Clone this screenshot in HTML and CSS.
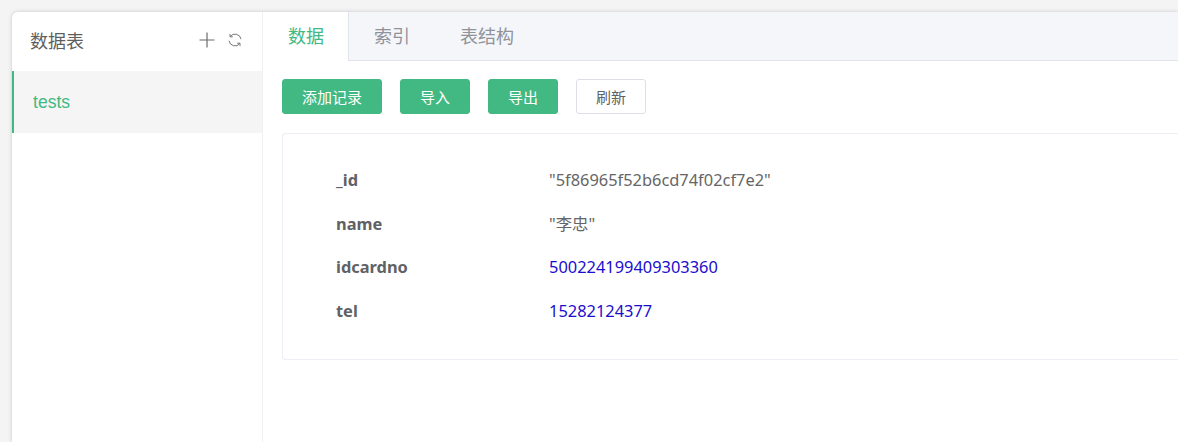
FILE: index.html
```html
<!DOCTYPE html>
<html lang="zh">
<head>
<meta charset="utf-8">
<title>数据表</title>
<link rel="stylesheet" href="styles.css">
</head>
<body>
<div class="panel">
  <aside class="sidebar">
    <div class="side-head">
      <span class="side-title">数据表</span>
      <div class="side-icons">
        <svg class="icon" width="16" height="16" viewBox="0 0 16 16"><path d="M8 .5v15M.5 8h15" fill="none" stroke="#6b6b6b" stroke-width="1.2"/></svg>
        <svg class="icon" width="14" height="14" viewBox="0 0 14 14"><path d="M2.2 3.6A6 6 0 0 1 13 6.2M11.8 10.4A6 6 0 0 1 1 7.8" fill="none" stroke="#777" stroke-width="1"/><path d="M2 1v2.8h2.8M12 13v-2.8H9.2" fill="none" stroke="#777" stroke-width="1"/></svg>
      </div>
    </div>
    <div class="side-item">tests</div>
  </aside>
  <main class="main">
    <nav class="tabs">
      <span class="tab active">数据</span>
      <span class="tab">索引</span>
      <span class="tab">表结构</span>
    </nav>
    <div class="content">
      <div class="toolbar">
        <button class="btn primary wide">添加记录</button>
        <button class="btn primary">导入</button>
        <button class="btn primary">导出</button>
        <button class="btn">刷新</button>
      </div>
      <div class="card">
        <div class="row"><span class="key">_id</span><span class="val">"5f86965f52b6cd74f02cf7e2"</span></div>
        <div class="row"><span class="key">name</span><span class="val">"李忠"</span></div>
        <div class="row"><span class="key">idcardno</span><span class="val num">500224199409303360</span></div>
        <div class="row"><span class="key">tel</span><span class="val num">15282124377</span></div>
      </div>
    </div>
  </main>
</div>
</body>
</html>
```
FILE: styles.css
```css
html, body {
  margin: 0;
  height: 100%;
  overflow: hidden;
}
body {
  background: #f4f4f4;
  padding: 12px 0 0 12px;
  box-sizing: border-box;
  font-family: "Noto Sans", "Noto Sans CJK SC", sans-serif;
  color: #606266;
}
.panel {
  display: flex;
  height: 100%;
  background: #fff;
  border-radius: 6px 0 0 0;
  box-shadow: 0 0 4px rgba(0, 0, 0, 0.18);
}
.sidebar {
  width: 250px;
  flex: none;
  border-right: 1px solid #f0f0f3;
}
.side-head {
  height: 59px;
  box-sizing: border-box;
  padding: 0 20px 4px 18px;
  display: flex;
  align-items: center;
  justify-content: space-between;
}
.side-title {
  font-size: 18px;
  color: #5f5f5f;
  font-family: "Noto Sans CJK SC", sans-serif;
}
.side-icons {
  display: flex;
  align-items: center;
  gap: 13px;
}
.side-item {
  height: 62px;
  line-height: 62px;
  background: #f5f5f5;
  border-left: 2px solid #42b983;
  padding-left: 19px;
  font-family: "Liberation Sans", sans-serif;
  font-size: 17.6px;
  color: #42b983;
}
.main {
  flex: 1;
  min-width: 0;
}
.tabs {
  display: flex;
  height: 49px;
  background: #f5f6fa;
  border-bottom: 1px solid #e2e4ec;
  box-sizing: border-box;
}
.tab {
  width: 86px;
  box-sizing: border-box;
  padding-left: 25px;
  line-height: 47px;
  font-size: 18px;
  color: #909399;
  font-family: "Noto Sans CJK SC", sans-serif;
}
.tab.active {
  background: #fff;
  color: #42b983;
  height: 49px;
  border-right: 1px solid #e2e4ec;
}
.content {
  padding: 18px 0 0 19px;
}
.toolbar {
  display: flex;
  gap: 18px;
  margin-bottom: 19px;
}
.btn {
  width: 70px;
  height: 35px;
  padding: 0;
  border: 1px solid #dcdfe6;
  border-radius: 3px;
  background: #fff;
  color: #606266;
  font-size: 15px;
  font-family: "Noto Sans CJK SC", sans-serif;
}
.btn.primary {
  background: #42b983;
  border-color: #42b983;
  color: #fff;
}
.btn.wide {
  width: 100px;
}
.card {
  border: 1px solid #ebeef5;
  border-right: 0;
  border-radius: 4px 0 0 4px;
  padding: 24px 0 26px 53px;
}
.row {
  display: flex;
  height: 43.67px;
  line-height: 43px;
  font-size: 16.4px;
}
.key {
  width: 213px;
  font-weight: 700;
  color: #606266;
}
.val {
  color: #666;
}
.val.num {
  color: #1a0dcc;
}
```
